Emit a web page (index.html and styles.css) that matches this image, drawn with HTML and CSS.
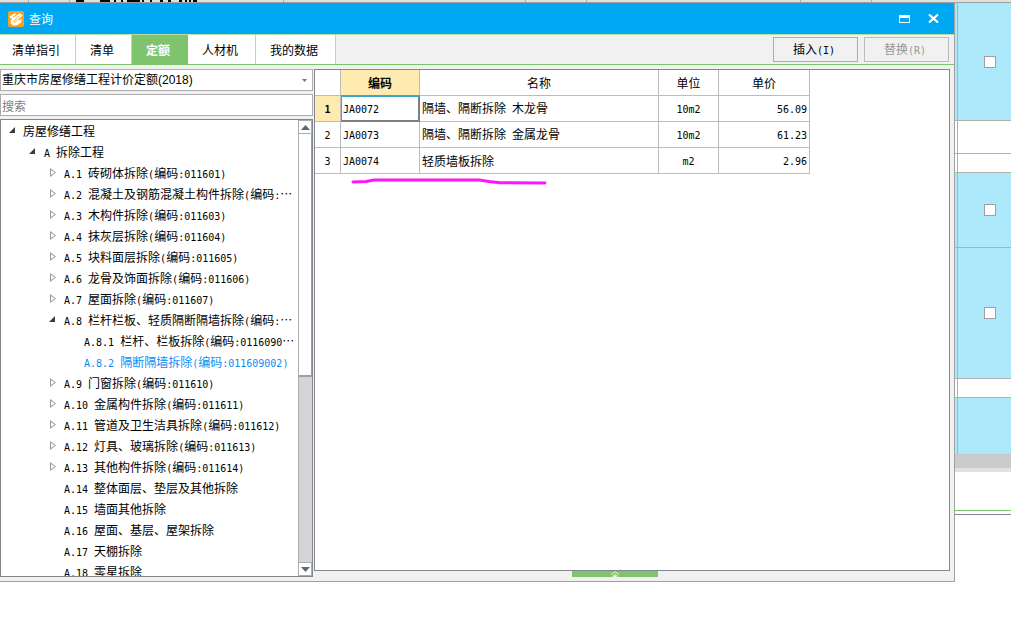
FILE: index.html
```html
<!DOCTYPE html>
<html lang="zh-CN">
<head>
<meta charset="utf-8">
<title>查询</title>
<link rel="stylesheet" href="styles.css">
</head>
<body>
<div class="sheet">
  <div class="sheet-head"><span class="h1"></span><span class="h2"></span><span class="h3"><svg width="130" height="2" viewBox="0 0 130 2"><path d="M6 1h8M30 1h10M44 1h2M51 1h2M57 1h13M72 1h2M80 1h2M90 1h3M98 1h3M109 1h3M115 1h2M119 1h2M123 1h4" stroke="#000" stroke-width="2"/></svg></span><span class="h4"></span><span class="h5"></span><span class="h6"></span><span class="h7"></span></div>
  <div class="sheet-rows">
    <div class="srow s1 blue"><input type="checkbox" aria-label="选择"></div>
    <div class="srow s2"></div>
    <div class="srow s3"></div>
    <div class="srow s4 blue"><input type="checkbox" aria-label="选择"></div>
    <div class="srow s5 blue"><input type="checkbox" aria-label="选择"></div>
    <div class="srow s3"></div>
    <div class="srow s6 blue"></div>
  </div>
  <div class="sheet-scroll"></div>
  <div class="sheet-foot"></div>
</div>

<main class="window">
  <header class="titlebar">
    <svg class="logo" width="16" height="16" viewBox="0 0 16 16"><rect width="16" height="16" rx="2" fill="#f9a11b"/><path d="M1.500 5.500 7 2l1 1.500-3.500 2.700 1 .3L12 2l2.500 2.500-4.500 4 .8.800 3-1.300-.8 3.500L9 14.200 5 14.500 2.500 12 2.800 9 4.500 7.500 2 7z" fill="#fff"/><path d="M5.500 10.500 12 4.500M6.500 12 9.500 9" stroke="#f9a11b" stroke-width=".9"/></svg>
    <h1>查询</h1>
    <button class="wbtn" aria-label="最大化"><svg width="11" height="8" viewBox="0 0 11 8"><path d="M0 0h11v8H0zM1 3v4h9V3z" fill="#fff" fill-rule="evenodd"/></svg></button>
    <button class="wbtn" aria-label="关闭"><svg width="11" height="9" viewBox="0 0 11 9"><path d="M1 .5 10 8.500M10 .5 1 8.500" stroke="#fff" stroke-width="2.200"/></svg></button>
  </header>
  <nav class="toolbar">
    <button class="tab">清单指引</button><button class="tab t2">清单</button><button class="tab t3 active">定额</button><button class="tab t4">人材机</button><button class="tab t5">我的数据</button>
    <div class="actions"><button class="act">插入<i>(I)</i></button><button class="act" disabled>替换<i>(R)</i></button></div>
  </nav>
  <div class="content">
    <aside class="side">
      <div class="combo"><select aria-label="定额库"><option>重庆市房屋修缮工程计价定额(2018)</option></select><svg width="5" height="3" viewBox="0 0 5 3"><path d="M0 0h5L2.500 3z" fill="#70747c"/></svg></div>
      <input class="search" type="text" placeholder="搜索" aria-label="搜索">
      <div class="treebox">
        <ul class="tree">
          <li class="open l0">房屋修缮工程</li>
          <li class="open l1"><i>A </i>拆除工程</li>
          <li class="shut l2"><i>A.1 </i>砖砌体拆除<i>(</i>编码<i>:011601)</i></li>
          <li class="shut l2"><i>A.2 </i>混凝土及钢筋混凝土构件拆除<i>(</i>编码<i>:</i>…</li>
          <li class="shut l2"><i>A.3 </i>木构件拆除<i>(</i>编码<i>:011603)</i></li>
          <li class="shut l2"><i>A.4 </i>抹灰层拆除<i>(</i>编码<i>:011604)</i></li>
          <li class="shut l2"><i>A.5 </i>块料面层拆除<i>(</i>编码<i>:011605)</i></li>
          <li class="shut l2"><i>A.6 </i>龙骨及饰面拆除<i>(</i>编码<i>:011606)</i></li>
          <li class="shut l2"><i>A.7 </i>屋面拆除<i>(</i>编码<i>:011607)</i></li>
          <li class="open l2"><i>A.8 </i>栏杆栏板、轻质隔断隔墙拆除<i>(</i>编码<i>:</i>…</li>
          <li class="l3"><i>A.8.1 </i>栏杆、栏板拆除<i>(</i>编码<i>:0116090</i>…</li>
          <li class="l3 current"><i>A.8.2 </i>隔断隔墙拆除<i>(</i>编码<i>:011609002)</i></li>
          <li class="shut l2"><i>A.9 </i>门窗拆除<i>(</i>编码<i>:011610)</i></li>
          <li class="shut l2"><i>A.10 </i>金属构件拆除<i>(</i>编码<i>:011611)</i></li>
          <li class="shut l2"><i>A.11 </i>管道及卫生洁具拆除<i>(</i>编码<i>:011612)</i></li>
          <li class="shut l2"><i>A.12 </i>灯具、玻璃拆除<i>(</i>编码<i>:011613)</i></li>
          <li class="shut l2"><i>A.13 </i>其他构件拆除<i>(</i>编码<i>:011614)</i></li>
          <li class="l2"><i>A.14 </i>整体面层、垫层及其他拆除</li>
          <li class="l2"><i>A.15 </i>墙面其他拆除</li>
          <li class="l2"><i>A.16 </i>屋面、基层、屋架拆除</li>
          <li class="l2"><i>A.17 </i>天棚拆除</li>
          <li class="l2"><i>A.18 </i>零星拆除</li>
        </ul>
        <div class="scroll">
          <button aria-label="向上"><svg width="9" height="5" viewBox="0 0 9 5"><path d="M0 5h9L4.500 0z" fill="#5f6672"/></svg></button>
          <div class="thumb"></div>
          <div class="track"></div>
          <button aria-label="向下"><svg width="9" height="5" viewBox="0 0 9 5"><path d="M0 0h9L4.500 5z" fill="#5f6672"/></svg></button>
        </div>
      </div>
    </aside>
    <section class="main">
      <div class="grid">
        <table>
          <colgroup><col class="c0"><col class="c1"><col class="c2"><col class="c3"><col class="c4"></colgroup>
          <thead><tr><th></th><th class="hot">编码</th><th>名称</th><th>单位</th><th>单价</th></tr></thead>
          <tbody>
            <tr><th class="hot"><i>1</i></th><td class="picked"><i>JA0072</i></td><td>隔墙、隔断拆除<i> </i>木龙骨</td><td class="mid"><i>10m2</i></td><td class="num"><i>56.09</i></td></tr>
            <tr><th><i>2</i></th><td><i>JA0073</i></td><td>隔墙、隔断拆除<i> </i>金属龙骨</td><td class="mid"><i>10m2</i></td><td class="num"><i>61.23</i></td></tr>
            <tr><th><i>3</i></th><td><i>JA0074</i></td><td>轻质墙板拆除</td><td class="mid"><i>m2</i></td><td class="num"><i>2.96</i></td></tr>
          </tbody>
        </table>
        <svg class="stroke" width="200" height="10" viewBox="0 0 200 10"><path d="M3 4 16 3.500 24 2 129 2 139 3.500 150 4.800 195 5" fill="none" stroke="#ff14ff" stroke-width="3" stroke-linecap="round" stroke-linejoin="round"/></svg>
      </div>
      <button class="handle" aria-label="展开"><svg width="10" height="6" viewBox="0 0 10 6"><path d="M1 3.500 5 .8 9 3.500M2.500 5.500 5 3.500 7.500 5.500" fill="none" stroke="#e6f5e0" stroke-width="1"/><path d="M3 6 5 4.200 7 6z" fill="#fff"/></svg></button>
    </section>
  </div>
</main>
</body>
</html>
```
FILE: styles.css
```css
* { box-sizing: border-box; }
body {
  margin: 0;
  height: 100vh;
  position: relative;
  overflow: hidden;
  background: #fff;
  color: #000;
  font: 12px/20px "Noto Sans CJK SC", sans-serif;
}
button, input, select { font: inherit; color: inherit; margin: 0; padding: 0; border-radius: 0; }
i { font: 10px/20px "DejaVu Sans Mono", monospace; white-space: pre; }
svg { display: block; }

/* worksheet behind the dialog */
.sheet-head { display: flex; height: 3px; background: #dbe3dd; border-bottom: 1px solid #a0a0a0; }
.sheet-head span { border-right: 1px solid #a8aca8; }
.h1 { width: 29px; }
.h2 { width: 41px; }
.h3 { width: 214px; }
.h4 { width: 242px; }
.h5 { width: 61px; }
.h6 { width: 214px; }
.h7 { width: 71px; }
.sheet-rows { width: 56px; margin-left: auto; }
.srow {
  display: flex;
  align-items: center;
  padding-left: 29px;
  border-bottom: 1px solid #b0b0b0;
  background: linear-gradient(#b0b0b0, #b0b0b0) 2px 0 / 1px 100% no-repeat;
}
.blue { background-color: #aee8fb; }
.s1 { height: 118px; }
.s2 { height: 33px; }
.s3 { height: 19px; }
.s4 { height: 75px; }
.s5 { height: 131px; }
.s6 { height: 57px; border-color: #c8c8c8; }
.srow input { appearance: none; width: 12px; height: 12px; background: #fff; border: 1px solid #a0a0a0; }
.sheet-scroll { height: 17px; background: #cbcbcb; border-bottom: 4px solid #e2e2e2; }
.sheet-foot { height: 43px; border-bottom: 1px solid #808490; background: linear-gradient(#7cc46a, #7cc46a) 0 38px / 100% 1px no-repeat; }

/* dialog */
.window {
  position: absolute;
  top: 2px;
  right: 56px;
  bottom: 51px;
  left: 0;
  display: flex;
  flex-direction: column;
  border: 1px solid #a0a0a0;
  border-left: 0;
  background: #f1f1f1;
}
.titlebar { display: flex; align-items: center; height: 31px; padding: 0 10px 0 8px; background: #00a8f3; color: #fff; }
.titlebar h1 { flex: 1; margin: 0 0 0 5px; font-size: 12px; font-weight: 400; }
.wbtn { display: grid; place-items: center; width: 21px; height: 20px; margin-left: 8px; border: 0; background: none; }
.toolbar { display: flex; height: 31px; border-top: 1px solid #b4e0a4; border-bottom: 1px solid #7cc46a; }
.tab { width: 76px; padding-right: 3px; border: 0; border-right: 1px solid #b4e0a4; background: #fff; }
.t2 { width: 56px; }
.t3 { width: 56px; }
.t4 { width: 68px; }
.t5 { width: 80px; }
.tab.active { background: #7fc46c; border-color: #7fc46c; color: #fff; font-weight: 700; }
.actions { display: flex; gap: 6px; margin-left: auto; padding: 2px 5px; }
.act { width: 85px; height: 25px; padding-right: 3px; border: 1px solid #adadad; background: #f1f1f1; }
.act:disabled { color: #989898; border-color: #bcbcbc; }

.content { flex: 1; display: flex; gap: 1px; min-height: 0; padding: 4px 4px 4px 0; }
.side { width: 313px; display: flex; flex-direction: column; }
.combo { display: flex; flex: none; align-items: center; height: 22px; padding-right: 5px; border: 1px solid #adadad; background: #fff; }
.combo select { appearance: none; flex: 1; height: 20px; padding-left: 1px; border: 0; background: none; font-family: "Liberation Sans", "Noto Sans CJK SC", sans-serif; }
.search { flex: none; height: 22px; margin: 3px 0; padding: 0 1px; border: 1px solid #adadad; background: #fff; }
.search::placeholder { color: #808080; opacity: 1; }
.treebox { flex: 1; min-height: 0; display: flex; border: 1px solid #828790; background: #fff; }
.tree { flex: 1; min-width: 0; margin: 0; padding: 0; overflow: hidden; list-style: none; }
.tree li { height: 21px; line-height: 21px; white-space: nowrap; }
.l0 { padding-left: 22px; --x: 8px; }
.l1 { padding-left: 43px; --x: 28px; }
.l2 { padding-left: 63px; --x: 48px; }
.l3 { padding-left: 83px; }
.open, .shut { position: relative; }
.open::before, .shut::before, .shut::after { content: ""; position: absolute; left: var(--x); top: 7px; width: 6px; height: 6px; }
.open::before { background: #3c3c3c; clip-path: polygon(100% 0, 100% 100%, 0 100%); }
.shut::before { left: calc(var(--x) + 1px); top: 6px; height: 9px; background: #989898; clip-path: polygon(0 0, 100% 50%, 0 100%); }
.shut::after { top: 8px; left: calc(var(--x) + 2px); width: 4px; height: 5px; background: #fff; clip-path: polygon(0 0, 90% 50%, 0 100%); }
.current { color: #0a8cf5; }
.scroll { width: 14px; display: flex; flex-direction: column; border-left: 1px solid #adadad; background: #d4d4d4; }
.scroll button { display: grid; place-items: center; height: 14px; border: 1px solid #adadad; border-left: 0; background: #fff; }
.thumb { flex: 242; border: solid #a0a0a0; border-width: 0 1px 2px 0; background: #fff; }
.track { flex: 186; }

.main { flex: 1; min-width: 0; display: flex; flex-direction: column; margin-bottom: -4px; padding-bottom: 4px; }
.grid { position: relative; flex: 1; border: 1px solid #828790; background: #fff; }
.handle { display: grid; place-items: center; width: 86px; height: 6px; margin: 0 auto 0 258px; border: 0; background: #82c46e; }
table { width: 495px; table-layout: fixed; border-collapse: separate; border-spacing: 0; }
.c0 { width: 26px; }
.c1 { width: 79px; }
.c2 { width: 239px; }
.c3 { width: 60px; }
.c4 { width: 91px; }
th, td { height: 26px; padding: 0 2px; border: solid #bcbcbc; border-width: 0 1px 1px 0; line-height: 20px; }
td { padding-left: 2px; text-align: left; }
th { font-weight: 400; text-align: center; }
th.hot { background: #ffebb0; font-weight: 700; }
th.hot i { font-weight: 700; }
thead .hot { border-bottom: 1px solid #3aa5d0; }
td.picked { border: solid #808080; border-width: 0 1px 1px 0; box-shadow: inset 1px 1px #3aa5d0, inset -1px -1px #808080; }
td.mid { text-align: center; }
td.num { text-align: right; }
.stroke { position: absolute; left: 35px; top: 108px; }
```
